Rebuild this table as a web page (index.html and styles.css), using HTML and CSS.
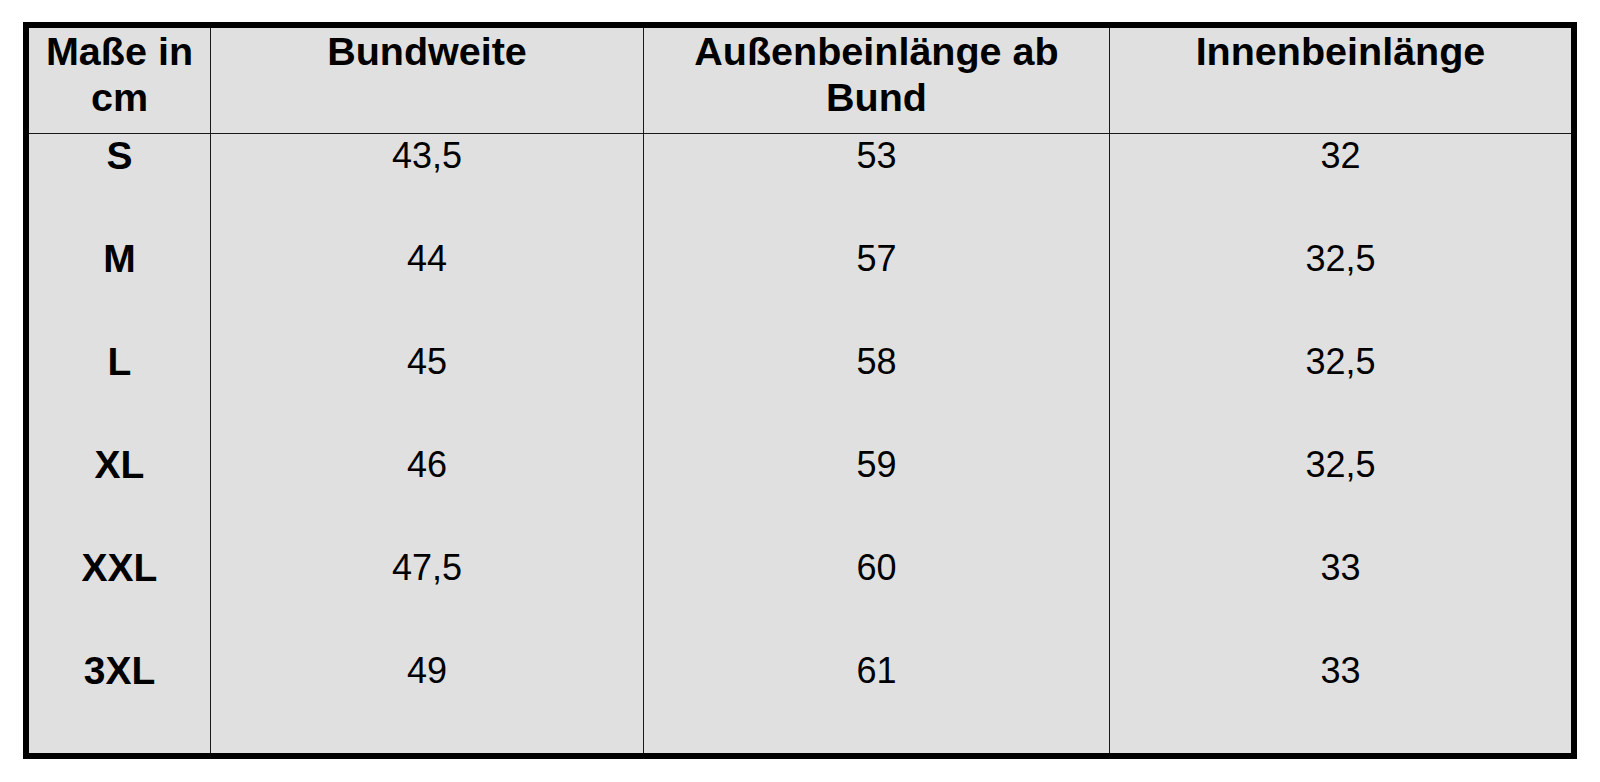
FILE: index.html
```html
<!DOCTYPE html>
<html lang="de">
<head>
<meta charset="utf-8">
<title>Größentabelle</title>
<link rel="stylesheet" href="styles.css">
</head>
<body>
<div class="page">
  <div class="size-table">
    <div class="cell head first">Maße in cm</div>
    <div class="cell head">Bundweite</div>
    <div class="cell head">Außenbeinlänge ab Bund</div>
    <div class="cell head">Innenbeinlänge</div>

    <div class="cell size first">S</div>
    <div class="cell">43,5</div>
    <div class="cell">53</div>
    <div class="cell">32</div>

    <div class="cell size first">M</div>
    <div class="cell">44</div>
    <div class="cell">57</div>
    <div class="cell">32,5</div>

    <div class="cell size first">L</div>
    <div class="cell">45</div>
    <div class="cell">58</div>
    <div class="cell">32,5</div>

    <div class="cell size first">XL</div>
    <div class="cell">46</div>
    <div class="cell">59</div>
    <div class="cell">32,5</div>

    <div class="cell size first">XXL</div>
    <div class="cell">47,5</div>
    <div class="cell">60</div>
    <div class="cell">33</div>

    <div class="cell size first">3XL</div>
    <div class="cell">49</div>
    <div class="cell">61</div>
    <div class="cell">33</div>
  </div>
</div>
</body>
</html>
```

FILE: styles.css
```css
html, body {
  margin: 0;
  padding: 0;
  background: #ffffff;
}

.page {
  padding: 22px 23px;
}

.size-table {
  width: 1542px;
  border: 6px solid #000000;
  background: #e0e0e0;
  display: grid;
  grid-template-columns: 181px 433px 466px 462px;
  grid-template-rows: 106px 103px 103px 103px 103px 103px 104px;
  font-family: "Liberation Sans", Arial, sans-serif;
  color: #000000;
}

.cell {
  border-left: 1px solid #1a1a1a;
  text-align: center;
  font-size: 36px;
  line-height: normal;
  padding-top: 1px;
}

.cell.first {
  border-left: none;
}

.cell.head {
  font-size: 39.5px;
  font-weight: bold;
  line-height: 46px;
  padding: 0 4px;
  border-bottom: 1px solid #1a1a1a;
}

.cell.size {
  font-weight: bold;
  font-size: 39px;
  padding-top: 0;
}
```
